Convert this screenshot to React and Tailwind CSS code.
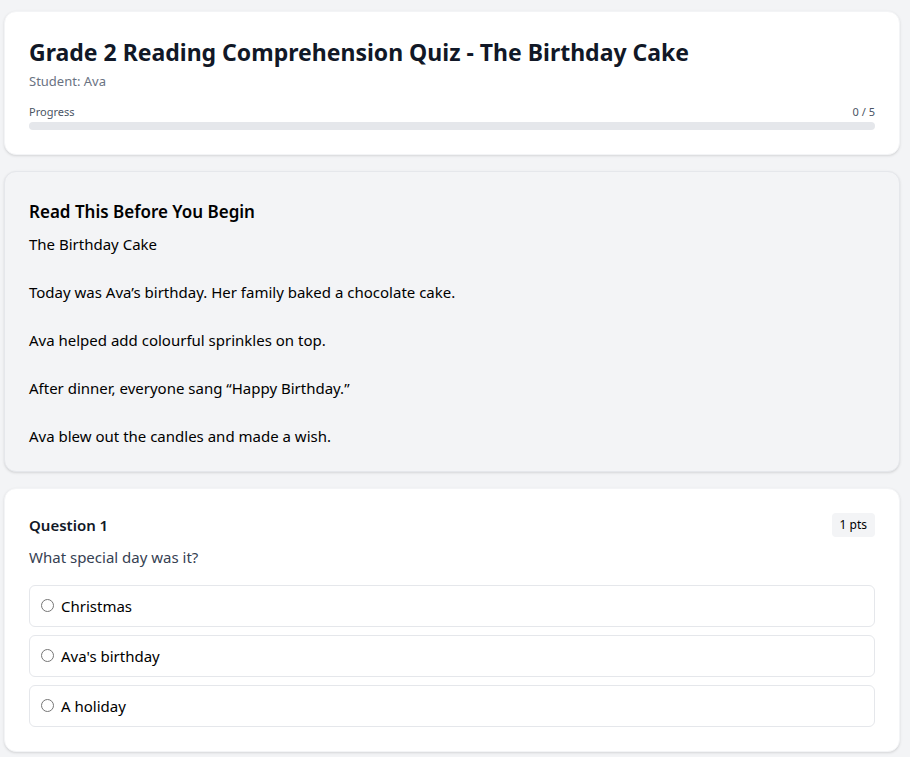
import React from 'react';

const passage = `The Birthday Cake

Today was Ava’s birthday. Her family baked a chocolate cake.

Ava helped add colourful sprinkles on top.

After dinner, everyone sang “Happy Birthday.”

Ava blew out the candles and made a wish.`;

const options = ['Christmas', "Ava's birthday", 'A holiday'];

export default function App() {
  return (
    <div
      className="min-h-screen bg-[#f3f4f6] pl-1 pt-[11px] pb-6"
      style={{ fontFamily: '"Noto Sans", "Open Sans", sans-serif' }}
    >
      <div className="w-[896px] space-y-4">
        <div className="bg-white rounded-xl shadow-sm px-6 pt-[24px] pb-6 border border-gray-100">
          <h1 className="text-[23px] leading-8 font-bold text-[#111827]">
            Grade 2 Reading Comprehension Quiz - The Birthday Cake
          </h1>
          <p className="text-[13px] leading-5 text-gray-500 mt-[3px]">Student: Ava</p>
          <div className="mt-[13px]">
            <div className="flex justify-between text-[11px] leading-4 text-gray-600 mb-[2px]">
              <span>Progress</span>
              <span>0 / 5</span>
            </div>
            <div className="h-2 w-full rounded-full bg-gray-200"></div>
          </div>
        </div>

        <div className="bg-[#f3f4f6] rounded-xl shadow-sm border border-gray-200 px-6 pt-[26px] pb-[23px]">
          <h2 className="text-[17px] leading-7 font-semibold text-black mb-[6px]">
            Read This Before You Begin
          </h2>
          <p className="whitespace-pre-line text-[15px] leading-6 text-black">{passage}</p>
        </div>

        <div className="bg-white rounded-xl shadow-sm border border-gray-100 px-6 pt-6 pb-6">
          <div className="flex justify-between items-center h-6">
            <h3 className="text-[15px] font-semibold text-[#111827]">Question 1</h3>
            <span className="text-[12px] text-black bg-gray-100 rounded px-2 h-6 flex items-center">
              1 pts
            </span>
          </div>
          <p className="text-[15px] text-gray-700 mt-[8px] leading-6">What special day was it?</p>
          <div className="mt-[16px] space-y-2">
            {options.map((o) => (
              <label
                key={o}
                className="flex items-center gap-[7px] h-[42px] px-3 border border-gray-200 rounded-md text-[15px] text-black"
              >
                <input type="radio" name="q1" className="w-[13px] h-[13px] mt-[-2px] ml-[-1px]" />
                <span>{o}</span>
              </label>
            ))}
          </div>
        </div>
      </div>
    </div>
  );
}
